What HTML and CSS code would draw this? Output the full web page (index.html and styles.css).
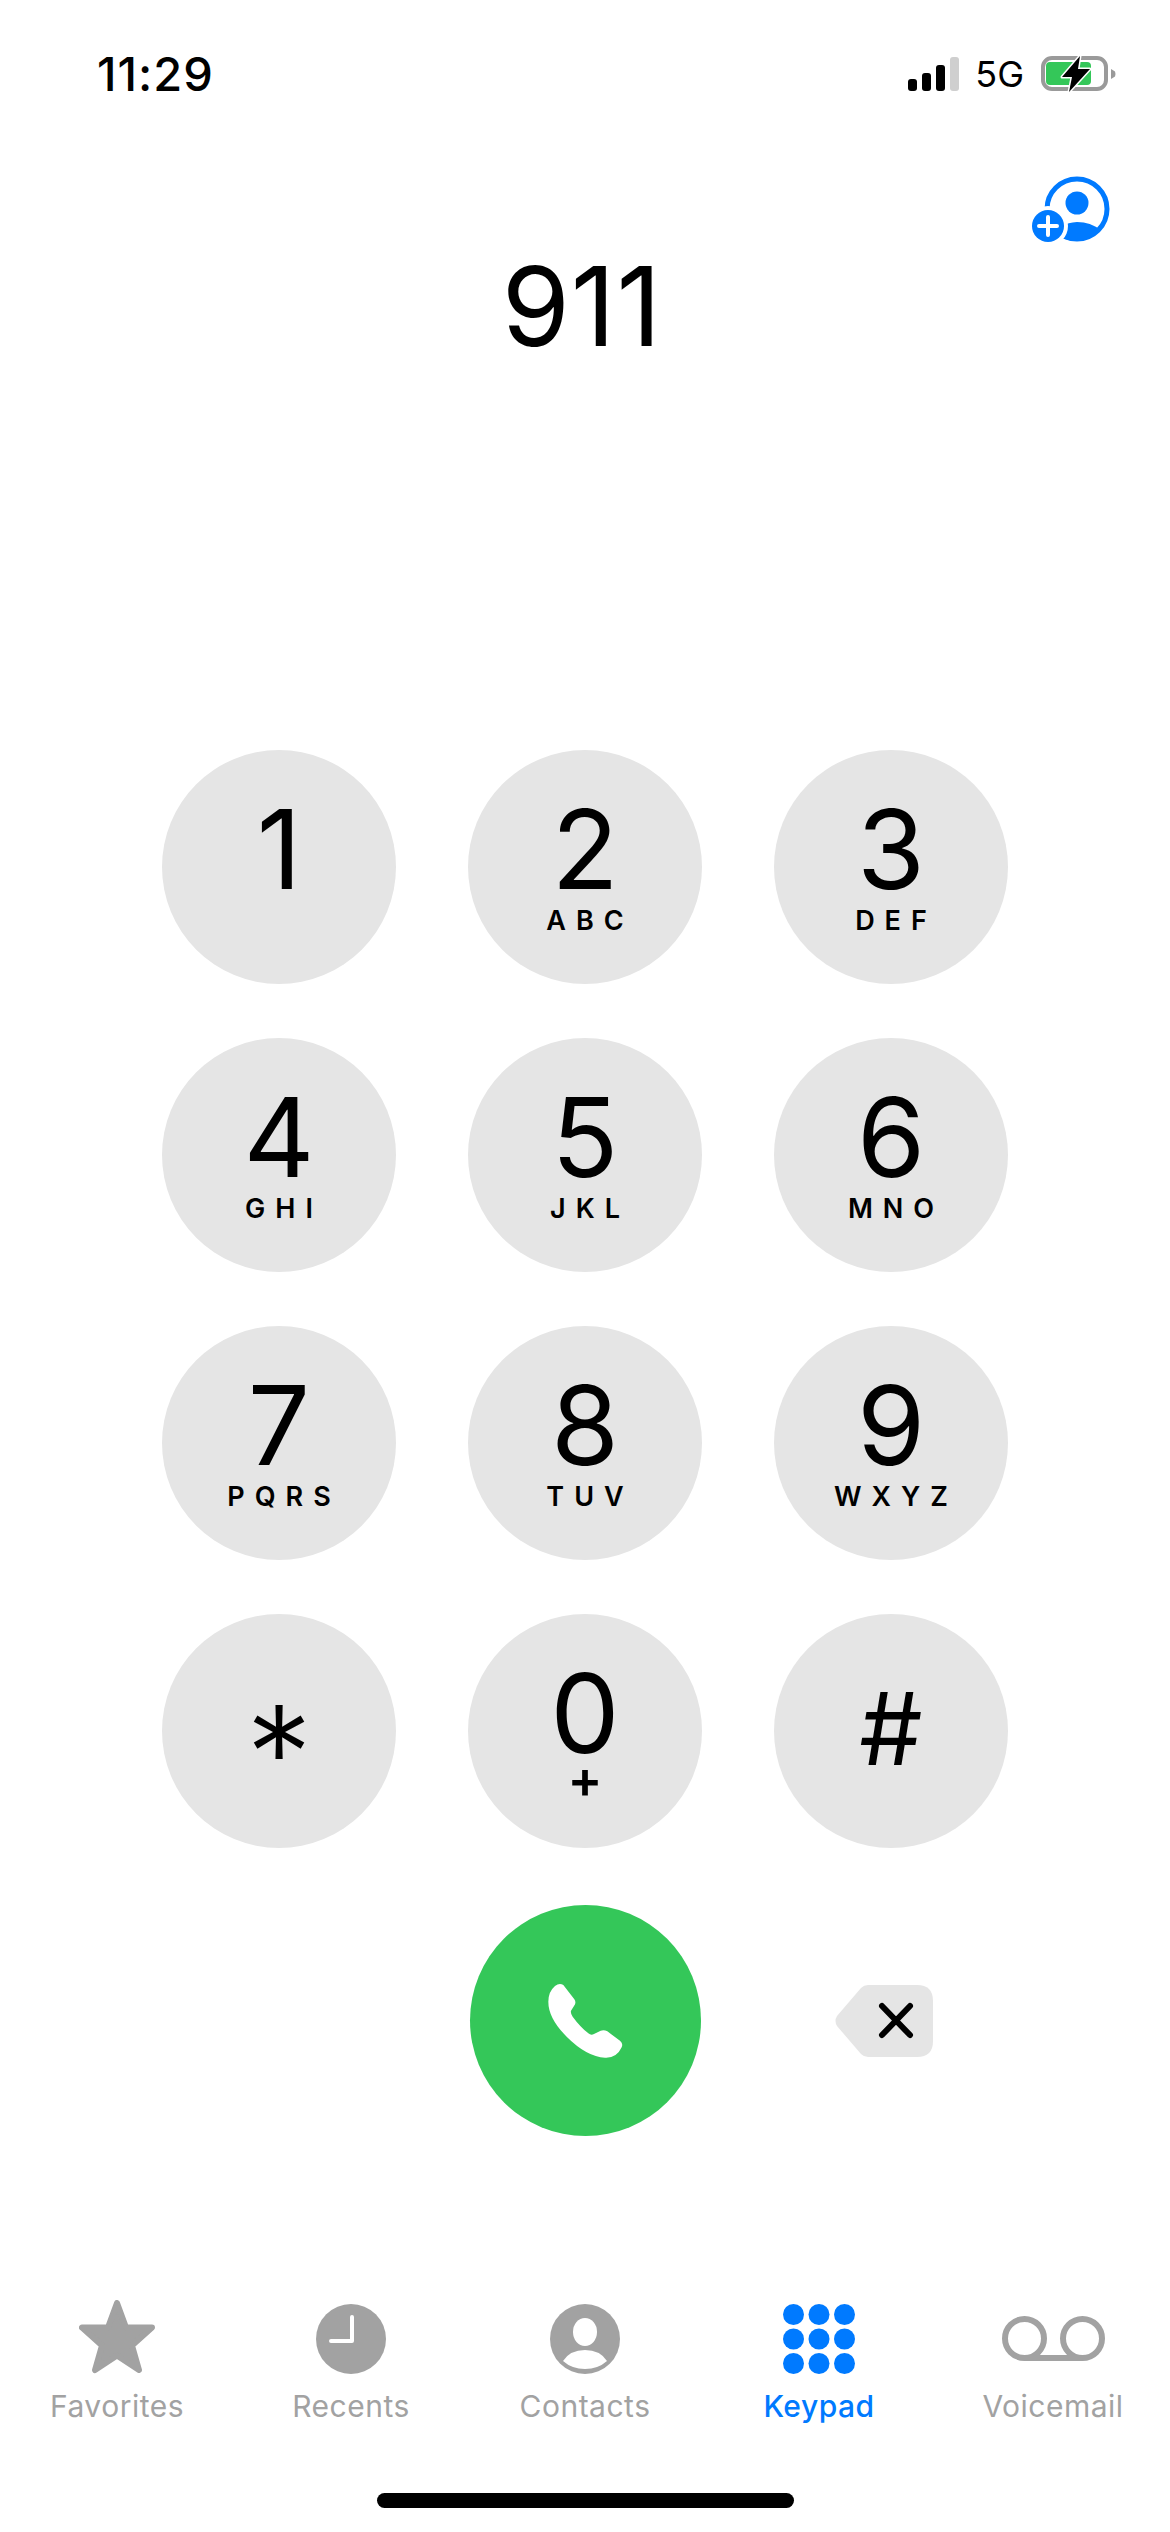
FILE: index.html
```html
<!DOCTYPE html>
<html lang="en">
<head>
<meta charset="utf-8">
<title>Keypad</title>
<link rel="stylesheet" href="styles.css">
</head>
<body>
<main class="phone">
  <header class="status">
    <span class="time">11:29</span>
    <div class="status-right">
      <div class="signal">
        <i class="bar b1"></i><i class="bar b2"></i><i class="bar b3"></i><i class="bar b4"></i>
      </div>
      <span class="net">5G</span>
      <svg class="battery" width="75" height="36" viewBox="0 0 75 36">
        <rect x="2" y="2" width="63" height="31" rx="9" fill="none" stroke="#9a9a9a" stroke-width="4"/>
        <rect x="5" y="6" width="45" height="23" rx="4" fill="#34c759"/>
        <path d="M70 13 L74 15.5 Q75 18 74 20.5 L70 23Z" fill="#9a9a9a"/>
        <path d="M39 0 L21 21 L31 21 L28 36 L49 13 L37 13Z" fill="#000" stroke="#fff" stroke-width="3" paint-order="stroke" stroke-linejoin="round"/>
      </svg>
    </div>
  </header>

  <div class="actions">
    <svg class="add-contact" width="80" height="68" viewBox="0 0 80 68">
      <circle cx="46" cy="33" r="30" fill="none" stroke="#007aff" stroke-width="5"/>
      <circle cx="46" cy="27" r="11.5" fill="#007aff"/>
      <path d="M24 58 Q28 47 46 46 Q60 46 69 54 A32 32 0 0 1 28 60Z" fill="#007aff"/>
      <circle cx="17" cy="50" r="20" fill="#fff"/>
      <circle cx="17" cy="50" r="16" fill="#007aff"/>
      <path d="M17 41 V59 M8 50 H26" stroke="#fff" stroke-width="4" stroke-linecap="round"/>
    </svg>
  </div>

  <div class="number">911</div>

  <section class="keypad">
    <button class="key"><span class="digit">1</span></button>
    <button class="key"><span class="digit">2</span><span class="letters">ABC</span></button>
    <button class="key"><span class="digit">3</span><span class="letters">DEF</span></button>
    <button class="key"><span class="digit">4</span><span class="letters">GHI</span></button>
    <button class="key"><span class="digit">5</span><span class="letters">JKL</span></button>
    <button class="key"><span class="digit">6</span><span class="letters">MNO</span></button>
    <button class="key"><span class="digit">7</span><span class="letters">PQRS</span></button>
    <button class="key"><span class="digit">8</span><span class="letters">TUV</span></button>
    <button class="key"><span class="digit">9</span><span class="letters">WXYZ</span></button>
    <button class="key"><span class="digit star-sym">*</span></button>
    <button class="key"><span class="digit">0</span><span class="plus">+</span></button>
    <button class="key"><span class="digit hash-sym">#</span></button>
    <div class="call-cell">
      <button class="call">
        <svg width="231" height="231" viewBox="90 75 693 693">
          <path d="M345 318 Q358 308 370 315 L403 358 Q410 368 402 378 L393 392 Q391 400 398 410 Q420 440 445 460 Q453 467 462 462 L482 452 Q492 448 502 454 L540 482 Q550 490 545 502 Q530 535 495 533 Q440 530 380 470 Q325 415 325 365 Q325 335 345 318Z" fill="#fff"/>
        </svg>
      </button>
    </div>
    <div class="back-cell">
      <svg width="99" height="72" viewBox="0 0 99 72">
        <path d="M33 0 H82 Q98 0 98 16 V56 Q98 72 82 72 H33 Q29 72 26 69 L2 41 Q-1 36 2 31 L26 3 Q29 0 33 0Z" fill="#e5e5e5"/>
        <path d="M47 21 L75 50 M75 21 L47 50" stroke="#000" stroke-width="6" stroke-linecap="round"/>
      </svg>
    </div>
  </section>

  <nav class="tabs">
    <a class="tab">
      <span class="tab-icon">
        <svg width="76" height="74" viewBox="0 0 76 74">
          <polygon points="38,3 47,27.5 73,27.5 53,45.5 60,70 38,55.5 16,70 23,45.5 3,27.5 29,27.5" fill="#a2a2a2" stroke="#a2a2a2" stroke-width="6" stroke-linejoin="round"/>
        </svg>
      </span>
      <span class="tab-label">Favorites</span>
    </a>
    <a class="tab">
      <span class="tab-icon">
        <svg width="70" height="70" viewBox="0 0 70 70">
          <circle cx="35" cy="35" r="35" fill="#a2a2a2"/>
          <path d="M36 13 V37 H15" fill="none" stroke="#fff" stroke-width="4" stroke-linecap="round" stroke-linejoin="round"/>
        </svg>
      </span>
      <span class="tab-label">Recents</span>
    </a>
    <a class="tab">
      <span class="tab-icon">
        <svg width="70" height="70" viewBox="0 0 70 70">
          <circle cx="35" cy="35" r="35" fill="#a2a2a2"/>
          <ellipse cx="35" cy="28" rx="12" ry="14" fill="#fff"/>
          <path d="M13 57 Q20 46 35 46 Q50 46 57 57 Q48 65 35 65 Q22 65 13 57Z" fill="#fff"/>
        </svg>
      </span>
      <span class="tab-label">Contacts</span>
    </a>
    <a class="tab tab-active">
      <span class="tab-icon">
        <svg width="72" height="70" viewBox="0 0 72 70">
          <g fill="#007aff">
            <circle cx="10.5" cy="10.5" r="10.5"/><circle cx="36" cy="10.5" r="10.5"/><circle cx="61.5" cy="10.5" r="10.5"/>
            <circle cx="10.5" cy="35" r="10.5"/><circle cx="36" cy="35" r="10.5"/><circle cx="61.5" cy="35" r="10.5"/>
            <circle cx="10.5" cy="59.5" r="10.5"/><circle cx="36" cy="59.5" r="10.5"/><circle cx="61.5" cy="59.5" r="10.5"/>
          </g>
        </svg>
      </span>
      <span class="tab-label">Keypad</span>
    </a>
    <a class="tab">
      <span class="tab-icon tab-icon-vm">
        <svg width="103" height="45" viewBox="0 0 103 45">
          <g fill="none" stroke="#a2a2a2" stroke-width="6">
            <circle cx="22.5" cy="22.5" r="19.5"/>
            <circle cx="80.5" cy="22.5" r="19.5"/>
            <path d="M22.5 42 H80.5"/>
          </g>
        </svg>
      </span>
      <span class="tab-label">Voicemail</span>
    </a>
  </nav>

  <div class="home-bar"></div>
</main>
</body>
</html>
```

FILE: styles.css
```css
* { box-sizing: border-box; }

html, body {
  margin: 0;
  padding: 0;
  background: #fff;
}

body {
  font-family: Inter, "Liberation Sans", sans-serif;
  color: #000;
}

.phone {
  width: 1170px;
  height: 2532px;
  display: flex;
  flex-direction: column;
  overflow: hidden;
}

.status {
  height: 148px;
  display: flex;
  align-items: center;
  justify-content: space-between;
  padding: 0 54px 0 97px;
}

.time {
  font-size: 47px;
  font-weight: 500;
  letter-spacing: 1px;
  line-height: 50px;
}

.status-right {
  display: flex;
  align-items: center;
}

.signal {
  display: flex;
  align-items: flex-end;
  gap: 5px;
  height: 34px;
}

.bar {
  display: block;
  width: 9px;
  background: #000;
  border-radius: 3px;
}
.b1 { height: 12px; }
.b2 { height: 18px; }
.b3 { height: 26px; }
.b4 { height: 34px; background: #cfcfcf; }

.net {
  font-size: 36px;
  font-weight: 400;
  line-height: 40px;
  margin: 0 17px 0 16px;
}

.battery { overflow: visible; display: block; }

.actions {
  display: flex;
  justify-content: flex-end;
  padding: 28px 59px 0 0;
  height: 96px;
}

.add-contact { display: block; }

.number {
  height: 120px;
  padding: 2px 6px 0 0;
  font-size: 110px;
  font-weight: 400;
  line-height: 120px;
  letter-spacing: 1px;
  text-align: center;
}

.keypad {
  margin: 386px 0 0 162px;
  display: grid;
  grid-template-columns: repeat(3, 234px);
  grid-auto-rows: 234px;
  column-gap: 72px;
  row-gap: 54px;
}

.key {
  width: 234px;
  height: 234px;
  border: 0;
  padding: 44px 0 0;
  margin: 0;
  border-radius: 50%;
  background: #e5e5e5;
  color: #000;
  font-family: inherit;
  display: flex;
  flex-direction: column;
  align-items: center;
  justify-content: flex-start;
}

.digit {
  font-size: 110px;
  font-weight: 400;
  line-height: 110px;
  height: 110px;
}

.letters {
  margin-top: 1px;
  font-size: 27px;
  font-weight: 600;
  line-height: 32px;
  letter-spacing: 10px;
  margin-right: -10px;
}

.plus {
  font-size: 52px;
  font-weight: 600;
  line-height: 36px;
  margin-top: -6px;
}

.star-sym {
  font-size: 132px;
  font-weight: 300;
  line-height: 130px;
  height: 130px;
  margin-top: 30px;
}

.hash-sym {
  font-size: 100px;
  font-weight: 400;
  line-height: 110px;
  margin-top: 16px;
}

.call-cell {
  margin-top: 3px;
  display: flex;
  justify-content: center;
  grid-column: 2;
}

.call {
  width: 231px;
  height: 231px;
  padding: 0;
  border: 0;
  border-radius: 50%;
  background: #34c759;
  display: block;
}
.call svg { display: block; }

.back-cell {
  display: flex;
  align-items: center;
  padding: 3px 0 0 61px;
}
.back-cell svg { display: block; overflow: visible; }

.tabs {
  margin-top: 164px;
  display: grid;
  grid-template-columns: repeat(5, 234px);
}

.tab {
  display: flex;
  flex-direction: column;
  align-items: center;
  color: #a2a2a2;
}

.tab-active { color: #007aff; }

.tab-icon {
  height: 74px;
  display: flex;
  align-items: flex-end;
}
.tab-icon svg { display: block; }
.tab-icon-vm { align-items: center; padding-top: 2px; }

.tab-label {
  margin-top: 14px;
  font-size: 30px;
  font-weight: 400;
  line-height: 36px;
  letter-spacing: 0.5px;
}

.tab-active .tab-label { font-weight: 500; }

.home-bar {
  width: 417px;
  height: 15px;
  margin: 69px 0 0 377px;
  border-radius: 8px;
  background: #000;
}
```
